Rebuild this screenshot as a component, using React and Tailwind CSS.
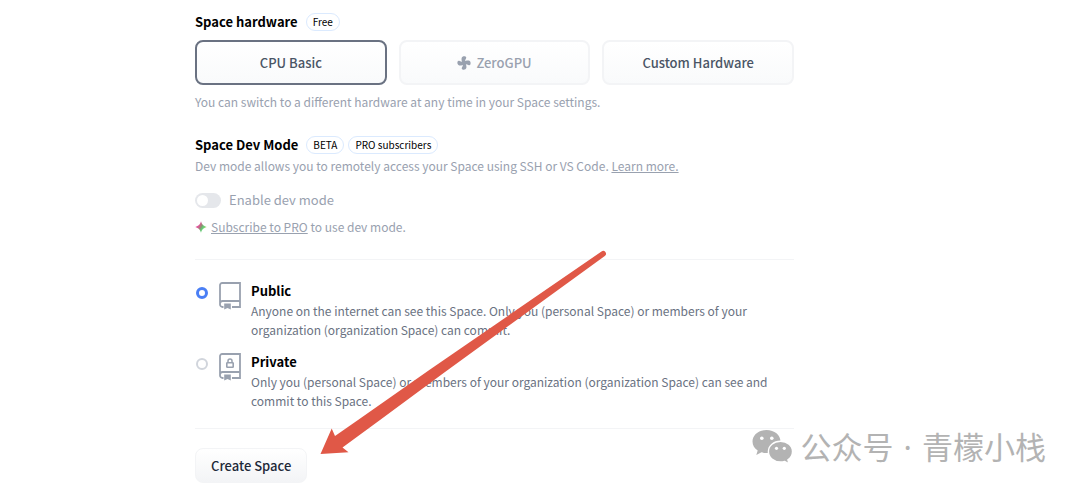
import { useState } from "react";

const visibilities = [
    {
        id: "public",
        title: "Public",
        description:
            "Anyone on the internet can see this Space. Only you (personal Space) or members of your organization (organization Space) can commit.",
    },
    {
        id: "private",
        title: "Private",
        description:
            "Only you (personal Space) or members of your organization (organization Space) can see and commit to this Space.",
    },
];

const FanIcon = () => (
    <svg className="h-[14px] w-[14px]" viewBox="0 0 14 14" fill="currentColor" aria-hidden="true">
        <g id="blade">
            <path d="M5.800 7.500C4.800 5.400 4.300 3.600 4.600 2.200C5 .5 7 0 8.500 .6C9.500 1.100 9.400 2 8.900 2.700C8.300 3.600 8 4.800 8.200 6.200Z" />
        </g>
        <use href="#blade" transform="rotate(90 7 7)" />
        <use href="#blade" transform="rotate(180 7 7)" />
        <use href="#blade" transform="rotate(270 7 7)" />
        <circle cx="7" cy="7" r="1.6" />
    </svg>
);

const SparkleIcon = () => (
    <svg className="h-3 w-3" viewBox="0 0 12 12" aria-hidden="true">
        <defs>
            <linearGradient id="sparkle" x1="0" y1="0.2" x2="1" y2="0.8">
                <stop offset="0.3" stopColor="#e0569b" />
                <stop offset="0.5" stopColor="#8f8f70" />
                <stop offset="0.65" stopColor="#5fd07a" />
                <stop offset="1" stopColor="#e8c95a" />
            </linearGradient>
        </defs>
        <path
            fill="url(#sparkle)"
            d="M6 .3C7.100 3.600 8.300 4.900 11.700 6C8.300 7.100 7.100 8.400 6 11.700C4.900 8.400 3.700 7.100 .3 6C3.700 4.900 4.900 3.600 6 .3Z"
        />
    </svg>
);

const RepoIcon = ({ locked }) => (
    <svg className="mt-px h-7 w-[22px] shrink-0 text-gray-400" viewBox="0 0 22 28" fill="none" aria-hidden="true">
        <path
            stroke="currentColor"
            strokeWidth="1.800"
            d="M4.500 25H3.600A2.600 2.600 0 0 1 1 22.400V3.200A2.200 2.200 0 0 1 3.200 1H21V25H13M1 21.500C1 19.800 2 19 3.600 19H21"
        />
        <path fill="currentColor" d="M5.200 21.500H11.800V27.600L8.500 26L5.200 27.600Z" />
        {locked && (
            <>
                <rect x="7.800" y="9.700" width="6.400" height="4.600" rx="0.600" stroke="currentColor" strokeWidth="1.600" />
                <path stroke="currentColor" strokeWidth="1.500" d="M9 9.500V8A2 2 0 0 1 13 8V9.500" />
            </>
        )}
    </svg>
);

const WeChatIcon = () => (
    <svg className="h-9 w-[41px]" viewBox="0 0 41 36" aria-hidden="true">
        <path
            fill="currentColor"
            d="M14.500 1C6.500 1 .5 6 .5 12.500C.5 16.300 2.500 19.500 5.700 21.600L4.300 26L9.500 23.300C11 23.800 12.700 24 14.500 24C22.500 24 28.500 19 28.500 12.500S22.500 1 14.500 1Z"
        />
        <path
            fill="currentColor"
            stroke="#fff"
            strokeWidth="1.400"
            d="M28.500 12.300C21.700 12.300 16.400 16.700 16.400 22.600S21.700 33 28.500 33C30 33 31.400 32.800 32.700 32.400L37 34.800L35.900 30.900C38.700 29 40.500 26 40.500 22.600C40.500 16.700 35.300 12.300 28.500 12.300Z"
        />
        <g fill="#fff">
            <circle cx="9.800" cy="9.300" r="1.800" />
            <circle cx="19.800" cy="9.300" r="1.800" />
            <circle cx="24.500" cy="19.300" r="1.600" />
            <circle cx="32.300" cy="19.300" r="1.600" />
        </g>
    </svg>
);

const Badge = ({ children }) => (
    <span className="rounded-full border border-blue-100 px-1.5 text-[10px] leading-4 text-black">{children}</span>
);

const hardwareButton = "flex h-[45px] flex-1 items-center justify-center gap-[5px] rounded-lg bg-linear-to-b from-white to-gray-50 text-[13px] font-medium";

const App = () => {
    const [visibility, setVisibility] = useState("public");

    return (
        <div className="relative bg-white pl-[195px] font-['Source_Sans_Pro','Noto_Sans_CJK_SC',sans-serif] text-[12px] text-gray-400">
            <form className="max-w-[599px]" onSubmit={(e) => e.preventDefault()}>
                <section className="pt-3">
                    <div className="flex items-center gap-2">
                        <h2 className="text-[13px] leading-5 font-bold text-black">Space hardware</h2>
                        <Badge>Free</Badge>
                    </div>
                    <div className="mt-2 flex gap-3">
                        <button type="button" className={`${hardwareButton} border-2 border-gray-500 text-gray-600`}>
                            CPU Basic
                        </button>
                        <button type="button" className={`${hardwareButton} border-2 border-gray-100 text-gray-400`}>
                            <FanIcon />
                            ZeroGPU
                        </button>
                        <button type="button" className={`${hardwareButton} border-2 border-gray-100 text-gray-600`}>
                            Custom Hardware
                        </button>
                    </div>
                    <p className="mt-2 leading-[18px]">You can switch to a different hardware at any time in your Space settings.</p>
                </section>

                <section className="mt-6">
                    <div className="flex items-center gap-1">
                        <h2 className="mr-1 text-[13px] leading-5 font-bold text-black">Space Dev Mode</h2>
                        <Badge>BETA</Badge>
                        <Badge>PRO subscribers</Badge>
                    </div>
                    <p className="mt-0.5 leading-[18px]">
                        Dev mode allows you to remotely access your Space using SSH or VS Code.{" "}
                        <a href="#learn-more" className="underline">Learn more.</a>
                    </p>
                    <label className="mt-[15px] flex items-center gap-2 text-[13px] leading-5">
                        <input
                            type="checkbox"
                            disabled
                            className="h-[15px] w-[26px] appearance-none rounded-full bg-gray-200 before:m-0.5 before:block before:h-[11px] before:w-[11px] before:rounded-full before:bg-white"
                        />
                        Enable dev mode
                    </label>
                    <p className="mt-2 flex items-center gap-1 leading-[18px]">
                        <SparkleIcon />
                        <span>
                            <a href="#pro" className="underline">Subscribe to PRO</a> to use dev mode.
                        </span>
                    </p>
                </section>

                <fieldset className="mt-[23px] flex flex-col gap-[13px] border-y border-gray-100 pt-[21px] pb-[18px]">
                    {visibilities.map(({ id, title, description }) => (
                        <label key={id} className="flex items-start">
                            <input
                                type="radio"
                                name="visibility"
                                value={id}
                                checked={visibility === id}
                                onChange={() => setVisibility(id)}
                                className="mt-1.5 mr-[11px] ml-px h-3 w-3 shrink-0 appearance-none rounded-full border-2 border-gray-300 bg-white checked:border-[3px] checked:border-[#4a7ff5]"
                            />
                            <RepoIcon locked={id === "private"} />
                            <span className="ml-2.5 block flex-1">
                                <span className="block text-[13px] leading-5 font-bold text-black">{title}</span>
                                <span className="block max-w-[520px] leading-[19px] text-gray-500">{description}</span>
                            </span>
                        </label>
                    ))}
                </fieldset>

                <button
                    type="submit"
                    className="mt-[19px] h-[35px] rounded-lg border border-gray-100 bg-linear-to-b from-white to-gray-100 px-[15px] text-[13px] font-medium text-gray-800"
                >
                    Create Space
                </button>
            </form>

            <svg className="pointer-events-none absolute top-[250px] left-[320px] h-[205px] w-[287px]" viewBox="320 250 287 205" aria-hidden="true">
                <path
                    fill="#e05847"
                    d="M320.500 454L331.700 428.500L335 436L358 420L430 369.500L601.500 251.500A2.700 2.700 0 0 1 604.800 256L445 372L380 420L342.500 447.500L348.500 452.300Z"
                />
            </svg>

            <div className="absolute top-[425px] right-[34px] flex items-center gap-2 text-[#b3b3b3]">
                <WeChatIcon />
                <span className="font-['Noto_Sans','Noto_Sans_CJK_SC',sans-serif] text-[31px] leading-[44px] whitespace-pre">
                    公众号<span className="px-0.5"> · </span>青檬小栈
                </span>
            </div>
        </div>
    );
};

export default App;
